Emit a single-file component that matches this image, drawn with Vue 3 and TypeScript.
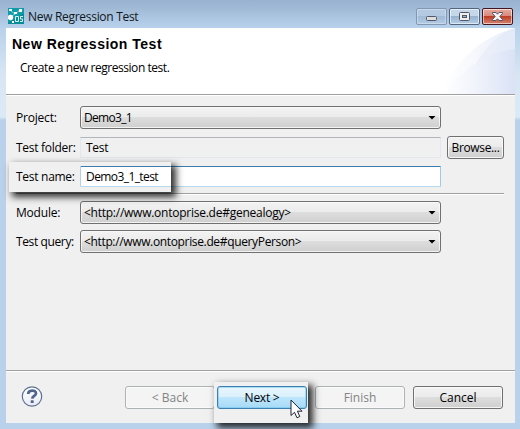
<script setup lang="ts">
import { ref } from 'vue'

const project = ref('Demo3_1')
const folder = ref('Test')
const testName = ref('Demo3_1_test')
const moduleUri = ref('<http://www.ontoprise.de#genealogy>')
const query = ref('<http://www.ontoprise.de#queryPerson>')
</script>

<template>
  <div class="window">
    <header class="titlebar">
      <svg class="app-icon" width="16" height="16" viewBox="0 0 16 16">
        <rect width="16" height="16" fill="#078c98" />
        <path d="M0 0H16V5L0 15Z" fill="#129ba6" />
        <path d="M3 3L7 6L12 2M7 6L2 9" stroke="#9bdce2" stroke-width="0.8" fill="none" />
        <circle cx="2.5" cy="9.5" r="2.7" fill="#fff" />
        <rect x="1" y="1" width="3" height="2" fill="#e8ffff" />
        <rect x="6" y="4" width="3" height="2" fill="#fff" />
        <rect x="11" y="1" width="3" height="3" fill="#fff" />
        <rect x="4" y="13" width="2" height="2" fill="#fff" />
        <path d="M7.5 8.5H10.5V13.5H7.5ZM15 8.5H12.5V11H14.5V13.5H12" stroke="#d9f4f5" fill="none" />
      </svg>
      <span class="caption">New Regression Test</span>
      <div class="controls">
        <span class="control dim">
          <svg width="31" height="17"><rect x="10.5" y="8.5" width="10" height="4" rx="1" fill="#dedede" stroke="#535666" /></svg>
        </span>
        <span class="control">
          <svg width="31" height="17">
            <rect x="10.5" y="4.5" width="10" height="8" rx="1" fill="#eee" stroke="#535666" />
            <rect x="13.5" y="7.5" width="4" height="2" fill="#91b4d5" stroke="#535666" />
          </svg>
        </span>
        <span class="control close">
          <svg width="31" height="17">
            <path d="M10.5 4.5H14L15.5 6.2L17 4.5H20.5V5.5L17.8 8.5L20.5 11.5V12.5H17L15.5 10.8L14 12.5H10.5V11.5L13.2 8.5L10.5 5.5Z" fill="#f4f4f4" stroke="#535666" />
          </svg>
        </span>
      </div>
    </header>

    <main class="client">
      <section class="banner">
        <svg class="swoosh" width="85" height="66" viewBox="0 0 85 66">
          <defs>
            <linearGradient id="outer" x1="0" x2="1"><stop offset="0" stop-color="#fff" /><stop offset="0.35" stop-color="#f9fafd" /><stop offset="1" stop-color="#e7ecf9" /></linearGradient>
            <linearGradient id="inner" x1="0" x2="1"><stop offset="0" stop-color="#fff" stop-opacity="0.5" /><stop offset="1" stop-color="#dae2f5" /></linearGradient>
          </defs>
          <path d="M12 66C22 38 47 10 85 0V66Z" fill="url(#outer)" />
          <path d="M46 36C55 20 67 6 85 0V22Q65 24 46 36Z" fill="#dfe7f8" opacity="0.4" />
          <path d="M12 66C31 43 55 24 85 21V66Z" fill="url(#inner)" />
        </svg>
        <h1>New Regression Test</h1>
        <p>Create a new regression test.</p>
      </section>

      <form class="form" @submit.prevent>
        <div class="row combo-row">
          <label class="l-project">Project:</label>
          <div class="combo"><span class="v-project">{{ project }}</span><i class="arrow"></i></div>
        </div>
        <div class="row folder-row">
          <label class="l-folder">Test folder:</label>
          <div class="field readonly"><span class="v-folder">{{ folder }}</span></div>
          <button type="button" class="button browse"><span>Browse...</span></button>
        </div>
        <div class="row name-row">
          <span></span>
          <div class="field active"></div>
          <div class="callout name-callout">
            <label class="l-name">Test name:</label>
            <div class="field active cut"><span class="v-name">{{ testName }}</span></div>
          </div>
        </div>
        <hr />
        <div class="row combo-row">
          <label class="l-module">Module:</label>
          <div class="combo"><span class="v-module">{{ moduleUri }}</span><i class="arrow"></i></div>
        </div>
        <div class="row combo-row query-row">
          <label class="l-query">Test query:</label>
          <div class="combo"><span class="v-query">{{ query }}</span><i class="arrow"></i></div>
        </div>
      </form>

      <footer class="footer">
        <svg class="help" width="22" height="22" viewBox="0 0 22 22">
          <defs><linearGradient id="hg" x2="0" y2="1"><stop offset="0" stop-color="#fff" /><stop offset="1" stop-color="#e9ebf2" /></linearGradient></defs>
          <circle cx="11" cy="10.5" r="9.7" fill="url(#hg)" stroke="#5d7195" stroke-width="1.2" />
          <path d="M7.2 8C7.2 3.6 15 3.5 15 7.3C15 9.9 11.4 9.8 11.2 12.7" fill="none" stroke="#4f648e" stroke-width="2.7" />
          <rect x="9.7" y="14.3" width="3" height="2.8" rx="0.7" fill="#4f648e" />
        </svg>
        <button type="button" class="button wide disabled" disabled><span class="b-back">&lt; Back</span></button>
        <div class="next-slot">
          <div class="callout next-callout">
            <button type="button" class="button wide primary"><span class="b-next">Next &gt;</span></button>
          </div>
          <svg class="cursor" width="14" height="21" viewBox="0 0 14 21">
            <path d="M1 1V16.5L4.5 13.3L7 18.8L9.8 17.5L7.4 12.2H12Z" fill="#fff" stroke="#1f2535" stroke-width="1" />
          </svg>
        </div>
        <button type="button" class="button wide disabled finish" disabled><span class="b-finish">Finish</span></button>
        <button type="button" class="button wide"><span class="b-cancel">Cancel</span></button>
      </footer>
    </main>
  </div>
</template>

<style>
body { margin: 0; overflow: hidden; }
</style>

<style scoped>
* { box-sizing: border-box; }
.window {
  width: 520px; height: 429px; padding: 0 5px 6px 6px; overflow: hidden;
  display: flex; flex-direction: column;
  background: linear-gradient(#99b4d1, #b9d1ea 28px, #d8e6f4 75px, #dce9f6 117px, #b9d1ea 120px);
  font: 12px/16px "Open Sans", "Noto Sans", sans-serif; color: #000;
}
.titlebar {
  height: 28px; flex: none; display: flex; align-items: flex-start;
  margin: 0 -5px 0 -6px; padding: 8px 7px 0 8px;
  background: linear-gradient(#98b2cf, #a2bbd7 35%, #b9d2ec);
}
.app-icon { display: block; }
.caption { margin-left: 4px; letter-spacing: -0.3px; white-space: nowrap; color: #101820; position: relative; top: 1px; }
.controls { margin-left: auto; display: flex; gap: 2px; }
.control {
  width: 31px; height: 17px; border: 1px solid #53657f; border-radius: 2px;
  background: linear-gradient(#c5d7eb 0 45%, #98b3cf 50%, #b5cee7);
  box-shadow: inset 0 0 0 1px #ffffff90;
}
.control svg { display: block; margin: -1px; }
.control.dim { border-color: #8297b2; background: linear-gradient(#b3cae2 0 45%, #a1bbd7 50%, #b2cae4); box-shadow: inset 0 0 0 1px #ffffff50; }
.control.close { border-color: #431422; background: linear-gradient(#e6a99e, #d98b7c 45%, #bd3d25 50%, #d48370); }
.client { width: 509px; height: 395px; background: #f0f0f0; display: flex; flex-direction: column; }
.banner {
  position: relative; height: 68px; flex: none; background: #fff; padding: 8px 6px 0;
  border-bottom: 1px solid #fff; box-shadow: inset 0 -1px #a0a0a0;
}
.swoosh { position: absolute; right: 0; top: 0; }
h1 { margin: 0; font: bold 14px/17px "Liberation Sans", sans-serif; letter-spacing: 0.5px; white-space: nowrap; }
p { margin: 7px 0 0 8px; white-space: nowrap; letter-spacing: -0.45px; }
.form { padding: 10px 11px 0 10px; }
.row { position: relative; display: grid; grid-template-columns: 64px 361px 57px; column-gap: 0; align-items: center; height: 23px; }
.row > .browse { margin-left: 6px; }
label, .combo span, .field span, .button span { white-space: nowrap; }
label { letter-spacing: -0.28px; }
.l-query { letter-spacing: -0.38px; }
.l-module, .l-project { letter-spacing: -0.2px; }
.v-project { letter-spacing: -0.7px; }
.v-folder { letter-spacing: -0.3px; }
.v-name { letter-spacing: -0.58px; }
.v-module { letter-spacing: -0.25px; }
.v-query { letter-spacing: -0.35px; }
.browse span { letter-spacing: -0.35px; }
.b-next { letter-spacing: -0.25px; }
.folder-row { margin-top: 7px; }
.name-row { margin-top: 6px; }
.combo {
  height: 23px; display: flex; align-items: center; justify-content: space-between;
  padding: 0 4px 0 3px; border: 1px solid #707070; border-radius: 3px;
  background: linear-gradient(#f3f3f3, #ebebeb 47%, #dddddd 50%, #cfcfcf);
  box-shadow: inset 0 0 0 1px #fafafad0;
}
.arrow { width: 8px; height: 4px; background: #000; clip-path: polygon(0 0, 100% 0, 50% 100%); }
.field { height: 21px; display: flex; align-items: center; padding-left: 5px; border: 1px solid #e2e7ee; border-top-color: #b2b5bc; border-radius: 1px; }
.field.active { background: #fff; border-color: #3d7bad #a4c9e3 #b7d9ed #b5cfe7; }
.callout { position: absolute; z-index: 2; background: #f0f0f0; box-shadow: 4px 4px 7px 1px #000000d0; }
.name-callout { left: -7px; top: -3px; width: 162px; height: 30px; display: grid; grid-template-columns: 71px 91px; align-items: center; padding-bottom: 1px; }
.name-callout label { padding-left: 7px; }
.field.cut { border-right: 0; }
hr { height: 2px; margin: 5px 0 6px 0; border: 0; border-top: 1px solid #a0a0a0; background: #fff; }
.query-row { margin-top: 6px; }
.button {
  height: 23px; padding: 0; display: flex; align-items: center; justify-content: center;
  font: inherit; color: #000; border: 1px solid #707070; border-radius: 3px;
  background: linear-gradient(#f2f2f2, #ebebeb 47%, #dddddd 50%, #cfcfcf);
  box-shadow: inset 0 0 0 1px #fbfbfbd0;
}
.browse { width: 57px; }
.wide { width: 90px; flex: none; }
.disabled { color: #838383; border-color: #adb2b5; background: #f4f4f4; }
.primary { border-color: #3c7fb1; background: linear-gradient(#eaf6fd, #d9f0fc 47%, #bee6fd 50%, #a7d9f5); box-shadow: inset 0 0 0 1px #65c4ee80; }
.footer { margin-top: auto; height: 53px; display: flex; padding: 15px 12px 0 15px; border-top: 1px solid #a0a0a0; box-shadow: inset 0 1px #fff; }
.help { flex: none; margin-right: 82px; }
.next-slot { position: relative; width: 90px; height: 23px; margin-left: 2px; }
.next-callout { left: -3px; top: -4px; width: 94px; height: 41px; padding: 4px 1px 0 3px; }
.cursor { position: absolute; z-index: 3; left: 73px; top: 13px; }
.finish { margin: 0 8px; }
</style>
